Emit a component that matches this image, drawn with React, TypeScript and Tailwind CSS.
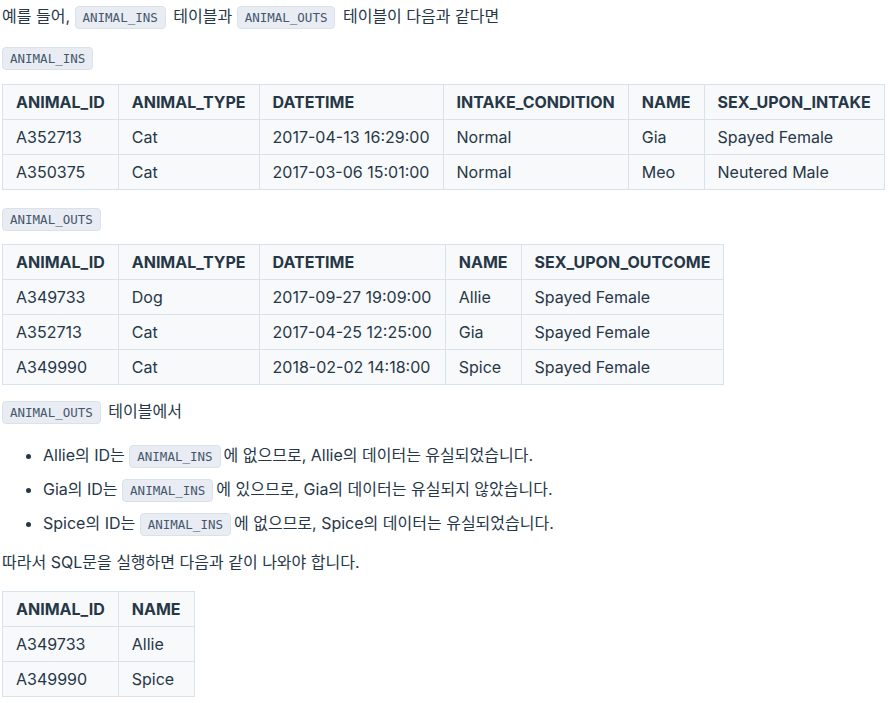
import React from "react";

const Code = ({ children }: { children: React.ReactNode }) => (
  <code className="mr-[3px] inline-block rounded-[4px] border border-[#d7e2eb] bg-[#e9ecf3] px-[7px] py-0 align-middle font-['DejaVu_Sans_Mono',monospace] text-[12.5px] leading-[21px] text-[#44576c]">
    {children}
  </code>
);

const Table = ({ head, rows }: { head: string[]; rows: string[][] }) => (
  <table className="border-collapse bg-[#f8f9fb] text-[16px] text-[#263747]">
    <thead>
      <tr>
        {head.map((h) => (
          <th
            key={h}
            className="h-[35px] border border-[#d7e2eb] px-[13px] py-0 text-left font-bold leading-[24px]"
          >
            {h}
          </th>
        ))}
      </tr>
    </thead>
    <tbody>
      {rows.map((r, i) => (
        <tr key={i}>
          {r.map((c, j) => (
            <td
              key={j}
              className="h-[35px] whitespace-nowrap border border-[#d7e2eb] px-[13px] py-0 leading-[24px]"
            >
              {c}
            </td>
          ))}
        </tr>
      ))}
    </tbody>
  </table>
);

export default function App() {
  return (
    <div className="min-h-[703px] bg-white pl-[2px] font-['Inter','Noto_Sans_CJK_KR',sans-serif] text-[16px] text-[#263747]">
      <p className="pt-[2px] leading-[28px]">
        예를 들어, <Code>ANIMAL_INS</Code> 테이블과 <Code>ANIMAL_OUTS</Code> 테이블이 다음과 같다면
      </p>
      <p className="mt-[13px] leading-[28px]">
        <Code>ANIMAL_INS</Code>
      </p>
      <div className="mt-[13px]">
        <Table
          head={["ANIMAL_ID", "ANIMAL_TYPE", "DATETIME", "INTAKE_CONDITION", "NAME", "SEX_UPON_INTAKE"]}
          rows={[
            ["A352713", "Cat", "2017-04-13 16:29:00", "Normal", "Gia", "Spayed Female"],
            ["A350375", "Cat", "2017-03-06 15:01:00", "Normal", "Meo", "Neutered Male"],
          ]}
        />
      </div>
      <p className="mt-[14px] leading-[28px]">
        <Code>ANIMAL_OUTS</Code>
      </p>
      <div className="mt-[12px]">
        <Table
          head={["ANIMAL_ID", "ANIMAL_TYPE", "DATETIME", "NAME", "SEX_UPON_OUTCOME"]}
          rows={[
            ["A349733", "Dog", "2017-09-27 19:09:00", "Allie", "Spayed Female"],
            ["A352713", "Cat", "2017-04-25 12:25:00", "Gia", "Spayed Female"],
            ["A349990", "Cat", "2018-02-02 14:18:00", "Spice", "Spayed Female"],
          ]}
        />
      </div>
      <p className="mt-[12px] leading-[28px]">
        <Code>ANIMAL_OUTS</Code> 테이블에서
      </p>
      <ul className="mt-[16px] list-disc pl-[41px]">
        <li className="leading-[28px]">
          Allie의 ID는 <Code>ANIMAL_INS</Code>에 없으므로, Allie의 데이터는 유실되었습니다.
        </li>
        <li className="mt-[6px] leading-[28px]">
          Gia의 ID는 <Code>ANIMAL_INS</Code>에 있으므로, Gia의 데이터는 유실되지 않았습니다.
        </li>
        <li className="mt-[6px] leading-[28px]">
          Spice의 ID는 <Code>ANIMAL_INS</Code>에 없으므로, Spice의 데이터는 유실되었습니다.
        </li>
      </ul>
      <p className="mt-[11px] leading-[28px]">따라서 SQL문을 실행하면 다음과 같이 나와야 합니다.</p>
      <div className="mt-[15px]">
        <Table
          head={["ANIMAL_ID", "NAME"]}
          rows={[
            ["A349733", "Allie"],
            ["A349990", "Spice"],
          ]}
        />
      </div>
    </div>
  );
}
